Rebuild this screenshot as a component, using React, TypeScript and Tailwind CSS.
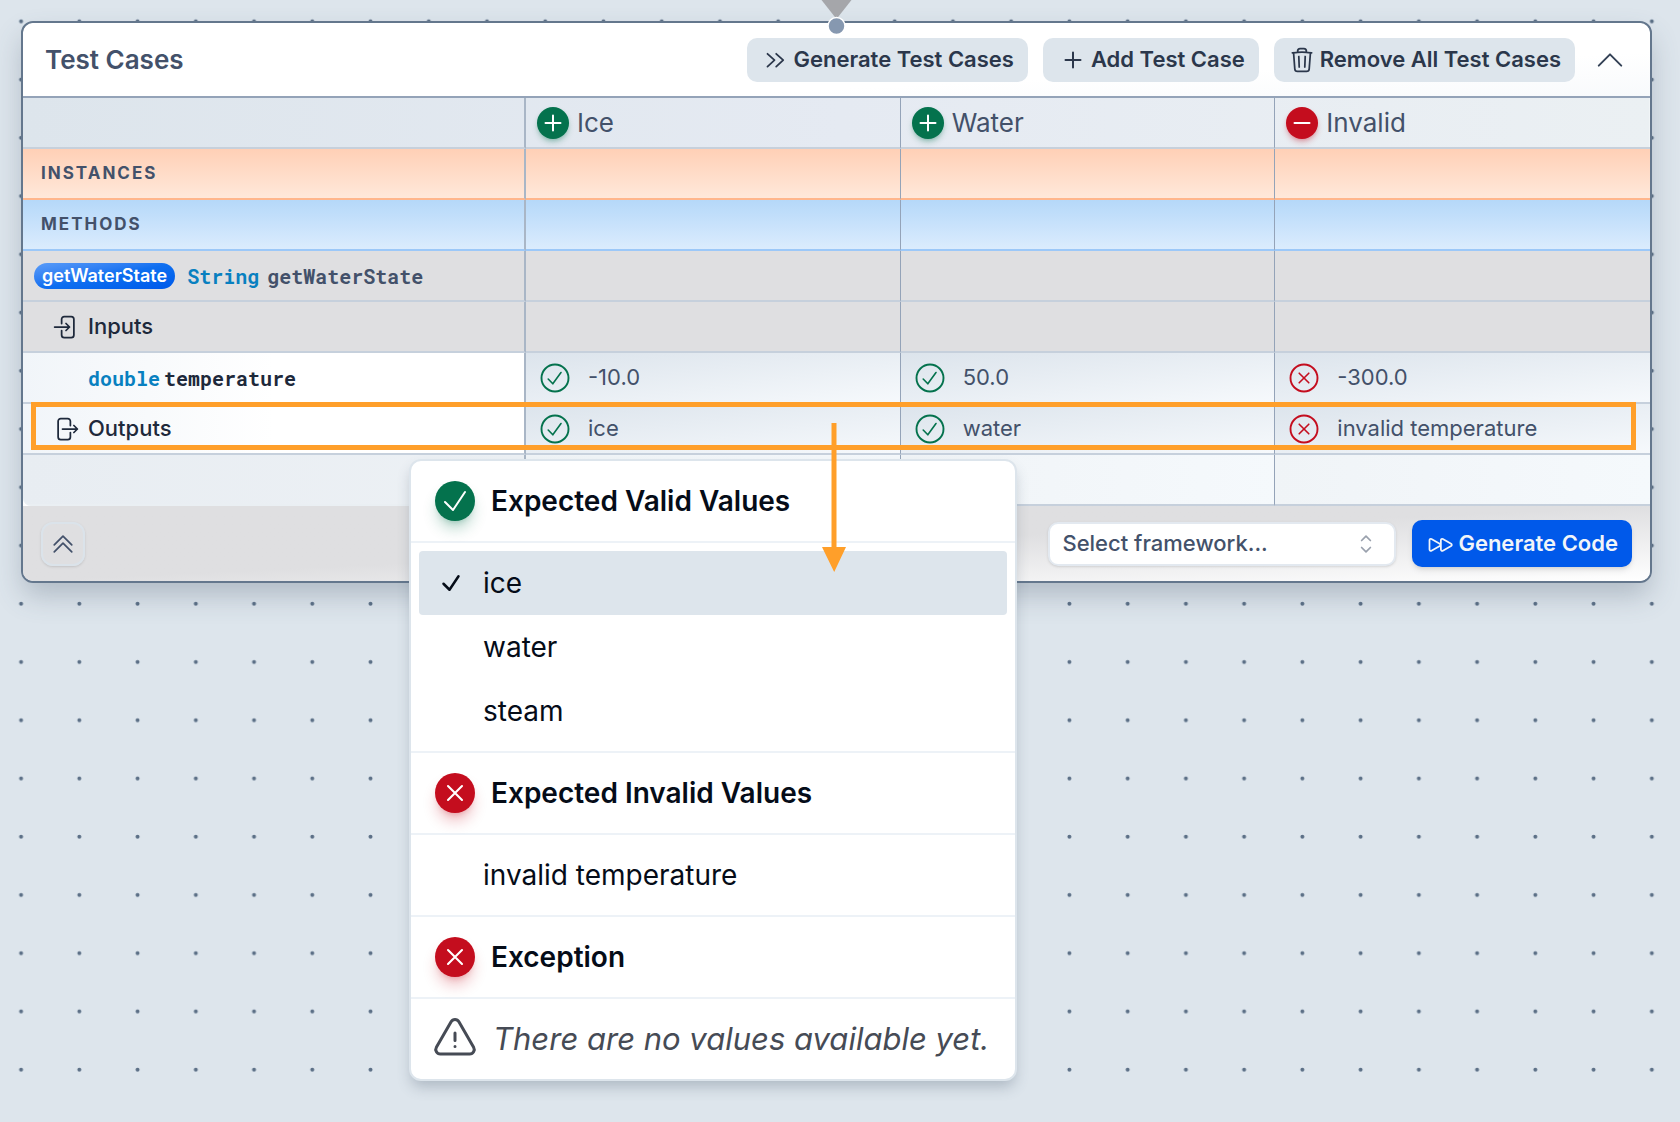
import React, { type ReactNode } from "react";
import {
  HiOutlineArrowRightEndOnRectangle,
  HiOutlineArrowRightStartOnRectangle,
  HiOutlineCheck,
  HiOutlineChevronDoubleUp,
  HiOutlineChevronUpDown,
  HiOutlineExclamationTriangle,
  HiOutlineForward,
  HiOutlineTrash,
} from "react-icons/hi2";

type Kind = "valid" | "invalid";

const cases: { name: string; kind: Kind; input: string; output: string }[] = [
  { name: "Ice", kind: "valid", input: "-10.0", output: "ice" },
  { name: "Water", kind: "valid", input: "50.0", output: "water" },
  { name: "Invalid", kind: "invalid", input: "-300.0", output: "invalid temperature" },
];

function DotGrid() {
  return (
    <svg className="pointer-events-none absolute inset-0 h-full w-full" aria-hidden="true">
      <defs>
        <pattern id="dots" x="-8" y="-8" width="58.24" height="58.24" patternUnits="userSpaceOnUse">
          <circle cx="29.1" cy="29.3" r="2" fill="#5b6f86" />
        </pattern>
      </defs>
      <rect width="100%" height="100%" fill="url(#dots)" />
    </svg>
  );
}

function Stroke({ d, width = 1.5, className }: { d: string; width?: number; className: string }) {
  return (
    <svg
      className={className}
      viewBox="0 0 24 24"
      fill="none"
      stroke="currentColor"
      strokeWidth={width}
      strokeLinecap="round"
      strokeLinejoin="round"
      aria-hidden="true"
    >
      <path d={d} />
    </svg>
  );
}

const PLUS = "M12 4.500v15m7.500-7.500h-15";
const MINUS = "M4.500 12h15";
const CHECK = "m4.500 12.750 6 6 9-13.500";
const CROSS = "M6 18 18 6M6 6l12 12";
const CHEVRON_UP = "m4.500 15.750 7.500-7.500 7.500 7.500";

function HeaderButton({ icon, children }: { icon: ReactNode; children: ReactNode }) {
  return (
    <button
      type="button"
      className="flex h-11 items-center rounded-[10px] bg-[#dde5ec] px-3.5 text-[22px] font-semibold text-[#2b374b]"
    >
      {icon}
      {children}
    </button>
  );
}

function Status({ kind }: { kind: Kind }) {
  return (
    <svg
      className={kind === "valid" ? "size-[30px] shrink-0 text-[#04724d]" : "size-[30px] shrink-0 text-[#c40d1e]"}
      viewBox="0 0 30 30"
      fill="none"
      stroke="currentColor"
      strokeLinecap="round"
      strokeLinejoin="round"
      role="img"
      aria-label={kind}
    >
      <circle cx="15" cy="15" r="13.5" strokeWidth="1.900" />
      <path
        d={kind === "valid" ? "M8.200 16 12.800 20.800 21 9.500" : "M10.200 10.200 19.800 19.800M19.800 10.200 10.200 19.800"}
        strokeWidth="1.600"
      />
    </svg>
  );
}

function Cells({ className, render }: { className: string; render?: (i: number) => ReactNode }) {
  return (
    <>
      {cases.map((c, i) => (
        <td
          key={c.name}
          className={`border-b-2 border-r border-r-[#94a3b8] p-0 last:border-r-0 ${className}`}
        >
          {render?.(i)}
        </td>
      ))}
    </>
  );
}

function ValueCells({ field }: { field: "input" | "output" }) {
  return (
    <Cells
      className="border-b-[#c6d0dc] bg-linear-to-br from-[#dce4ec] to-[#f6f9fc]"
      render={(i) => (
        <div className="flex items-center gap-[18px] pl-3.5 text-[22px]">
          <Status kind={cases[i].kind} />
          {cases[i][field]}
        </div>
      )}
    />
  );
}

const first = "border-b-2 border-r-2 border-r-[#a9b6c6] p-0 text-left font-normal";

function Band({ label, className }: { label: string; className: string }) {
  return (
    <tr className="h-[51px]">
      <th scope="row" className={`${first} ${className}`}>
        <div className="pl-[18px] text-[17px] font-bold tracking-[2px]">{label}</div>
      </th>
      <Cells className={className} />
    </tr>
  );
}

function MenuHeading({ kind, children }: { kind: Kind; children: ReactNode }) {
  return (
    <div className="flex h-[82px] items-center gap-4 border-b-2 border-[#edf2f7] px-6 text-[28px] font-semibold text-[#050c18]">
      <span
        className={
          kind === "valid"
            ? "flex size-10 items-center justify-center rounded-full bg-[#04724d] text-white shadow-lg shadow-[#04724d]/30"
            : "flex size-10 items-center justify-center rounded-full bg-[#c40d1e] text-white shadow-lg shadow-[#c40d1e]/30"
        }
      >
        {kind === "valid" ? (
          <Stroke d={CHECK} className="size-8" />
        ) : (
          <Stroke d={CROSS} width={1.8} className="size-7" />
        )}
      </span>
      {children}
    </div>
  );
}

function MenuItem({ selected, children }: { selected?: boolean; children: ReactNode }) {
  return (
    <button
      type="button"
      role="menuitemradio"
      aria-checked={!!selected}
      className={
        selected
          ? "flex h-16 w-full items-center rounded bg-[#dde5ec] text-left text-[28px] text-[#050c18]"
          : "flex h-16 w-full items-center rounded text-left text-[28px] text-[#050c18]"
      }
    >
      <span className="flex w-16 justify-center">
        {selected && <HiOutlineCheck className="size-6" strokeWidth={2.5} />}
      </span>
      {children}
    </button>
  );
}

function ValueMenu() {
  return (
    <div
      role="menu"
      aria-label="Expected values"
      className="absolute left-[409px] top-[459px] w-[608px] rounded-xl border-2 border-[#dde5ec] bg-white shadow-[0_8px_14px_-2px_rgba(71,85,105,0.3)]"
    >
      <MenuHeading kind="valid">Expected Valid Values</MenuHeading>
      <div className="border-b-2 border-[#edf2f7] p-2">
        <MenuItem selected>ice</MenuItem>
        <MenuItem>water</MenuItem>
        <MenuItem>steam</MenuItem>
      </div>
      <MenuHeading kind="invalid">Expected Invalid Values</MenuHeading>
      <div className="border-b-2 border-[#edf2f7] p-2">
        <MenuItem>invalid temperature</MenuItem>
      </div>
      <MenuHeading kind="invalid">Exception</MenuHeading>
      <p className="flex h-20 items-center gap-3.5 whitespace-nowrap pl-5 text-[31px] italic text-[#464b55]">
        <HiOutlineExclamationTriangle className="size-12 shrink-0" />
        There are no values available yet.
      </p>
    </div>
  );
}

export default function App() {
  return (
    <main className="relative min-h-screen overflow-hidden bg-[#dde5ec] pt-[21px] pr-7 pl-[21px] font-['Inter',sans-serif] text-[#43516a]">
      <DotGrid />

      <section className="relative rounded-xl border-2 border-[#64778d] bg-white shadow-[0_14px_28px_-2px_rgba(71,85,105,0.3)]">
        <header className="flex h-[73px] items-center gap-[15px] rounded-t-xl bg-linear-to-br from-white from-70% to-[#f8fafc] px-[22px]">
          <h1 className="mr-auto text-[26px] font-semibold">Test Cases</h1>
          <HeaderButton
            icon={
              <svg
                className="mr-2 ml-1 h-5 w-5"
                viewBox="0 0 20 20"
                fill="none"
                stroke="currentColor"
                strokeWidth="1.800"
                strokeLinecap="round"
                strokeLinejoin="round"
                aria-hidden="true"
              >
                <path d="M2.500 3.800 9.500 10.200 2.500 16.600M11.200 3.800 18.200 10.200 11.200 16.600" />
              </svg>
            }
          >
            Generate Test Cases
          </HeaderButton>
          <HeaderButton icon={<Stroke d={PLUS} width={2} className="mr-1.5 ml-1 size-6" />}>
            Add Test Case
          </HeaderButton>
          <HeaderButton icon={<HiOutlineTrash className="mr-1 size-7" />}>Remove All Test Cases</HeaderButton>
          <button type="button" aria-label="Collapse" className="ml-0.5 text-[#334155]">
            <Stroke d={CHEVRON_UP} width={1.3} className="size-9" />
          </button>
        </header>

        <table className="w-full table-fixed border-separate border-spacing-0 border-t-2 border-[#94a3b8]">
          <colgroup>
            <col className="w-[503px]" />
            <col />
            <col />
            <col />
          </colgroup>
          <thead>
            <tr className="h-[51px] bg-linear-to-r from-[#dde5ec] via-[#e5eaf2] to-[#ebf0f3]">
              <td className={`${first} border-b-[#c7d0db]`} />
              {cases.map((c) => (
                <th
                  key={c.name}
                  scope="col"
                  className="border-b-2 border-r border-b-[#c7d0db] border-r-[#94a3b8] p-0 font-normal last:border-r-0"
                >
                  <div className="flex items-center gap-2 pl-[11px] text-[26px]">
                    <span
                      className={
                        c.kind === "valid"
                          ? "flex size-8 items-center justify-center rounded-full bg-[#04724d] text-white shadow-md shadow-[#04724d]/30"
                          : "flex size-8 items-center justify-center rounded-full bg-[#c40d1e] text-white shadow-md shadow-[#c40d1e]/30"
                      }
                    >
                      <Stroke d={c.kind === "valid" ? PLUS : MINUS} width={2} className="size-6" />
                    </span>
                    {c.name}
                  </div>
                </th>
              ))}
            </tr>
          </thead>
          <tbody>
            <Band label="INSTANCES" className="border-b-[#ffb68c] bg-linear-to-b from-[#ffd0b6] to-[#ffe8da]" />
            <Band label="METHODS" className="border-b-[#9cc8f8] bg-linear-to-b from-[#b5d8f9] to-[#dbecfd]" />
            <tr className="h-[51px]">
              <th scope="row" className={`${first} border-b-[#c6d0dc] bg-[#dfdfe1]`}>
                <div className="flex items-center gap-3 pl-[11px]">
                  <span className="rounded-full bg-linear-to-br from-[#5a9cf8] via-[#0f6ff0] to-[#0059ea] px-2 text-[18px] leading-[26px] font-semibold text-white">
                    getWaterState
                  </span>
                  <span className="font-['Roboto_Mono','Liberation_Mono',monospace] text-[20px] font-bold">
                    <span className="mr-2 text-[#0880c0]">String</span>getWaterState
                  </span>
                </div>
              </th>
              <Cells className="border-b-[#c6d0dc] bg-[#dfdfe1]" />
            </tr>
            <tr className="h-[51px]">
              <th scope="row" className={`${first} border-b-[#c6d0dc] bg-[#dfdfe1]`}>
                <div className="flex items-center gap-2 pl-[29px] text-[22px] font-medium text-[#1e293b]">
                  <HiOutlineArrowRightEndOnRectangle className="size-7" />
                  Inputs
                </div>
              </th>
              <Cells className="border-b-[#c6d0dc] bg-[#dfdfe1]" />
            </tr>
            <tr className="h-[51px]">
              <th
                scope="row"
                className={`${first} border-b-[#c6d0dc] bg-white bg-linear-to-r from-[#f1f5f9] to-white to-50%`}
              >
                <div className="pl-[65px] font-['Roboto_Mono','Liberation_Mono',monospace] text-[20px] font-bold text-[#1e293b]">
                  <span className="mr-1 text-[#0880c0]">double</span>temperature
                </div>
              </th>
              <ValueCells field="input" />
            </tr>
            <tr className="h-[51px]">
              <th
                scope="row"
                className={`${first} border-b-[#c6d0dc] bg-white bg-linear-to-r from-[#f1f5f9] to-white to-50%`}
              >
                <div className="flex items-center gap-2 pl-[29px] text-[22px] font-medium text-[#1e293b]">
                  <HiOutlineArrowRightStartOnRectangle className="size-7" />
                  Outputs
                </div>
              </th>
              <ValueCells field="output" />
            </tr>
            <tr className="h-[51px]">
              <td className={`${first} rounded-bl-lg border-b-[#eaeff3] bg-linear-to-r from-[#e8edf2] to-[#edf1f5]`} />
              <Cells className="border-b-[#c6d0dc] bg-linear-to-r from-[#f0f4f7] to-[#f5f9fc]" />
            </tr>
          </tbody>
        </table>

        <footer className="flex h-[75px] items-center gap-4 rounded-b-[10px] bg-linear-to-br from-[#dfdfe1] from-50% to-white px-[18px]">
          <button
            type="button"
            aria-label="Collapse all"
            className="mr-auto flex size-11 items-center justify-center rounded-xl border-2 border-[#dbe3ea] text-[#43516a] shadow-sm"
          >
            <HiOutlineChevronDoubleUp className="size-7" />
          </button>
          <div className="relative">
            <select
              aria-label="Framework"
              className="h-11 w-[348px] appearance-none rounded-[10px] border-2 border-[#e3e9f0] bg-white pl-3 text-[22px] font-medium text-[#43516a] shadow-sm"
            >
              <option>Select framework...</option>
            </select>
            <HiOutlineChevronUpDown className="pointer-events-none absolute top-2 right-4 size-7 text-[#9aa1ad]" />
          </div>
          <button
            type="button"
            className="flex h-[47px] items-center gap-1 rounded-[10px] bg-[#0059ea] px-3.5 text-[22px] font-semibold text-[#f1f5f9] shadow-md"
          >
            <HiOutlineForward className="size-7" />
            Generate Code
          </button>
        </footer>
      </section>

      <svg className="absolute top-0 left-[820px] h-9 w-8" viewBox="0 0 32 36" aria-hidden="true">
        <path d="M1.500 0H31.500L16.500 19Z" fill="#a5a6aa" />
        <circle cx="16.500" cy="26" r="8.500" fill="#8698b0" stroke="#fff" strokeWidth="1.500" />
      </svg>

      <ValueMenu />

      <div className="pointer-events-none absolute top-[402px] right-[44px] left-[31px] h-12 border-5 border-[#ff9f2a]" />
      <svg
        className="pointer-events-none absolute top-[423px] left-[822px] h-[149px] w-6"
        viewBox="0 0 24 149"
        aria-hidden="true"
      >
        <path d="M9.500 0h5v124H24L12.200 149 0 124h9.500Z" fill="#ff9f2a" />
      </svg>
    </main>
  );
}
